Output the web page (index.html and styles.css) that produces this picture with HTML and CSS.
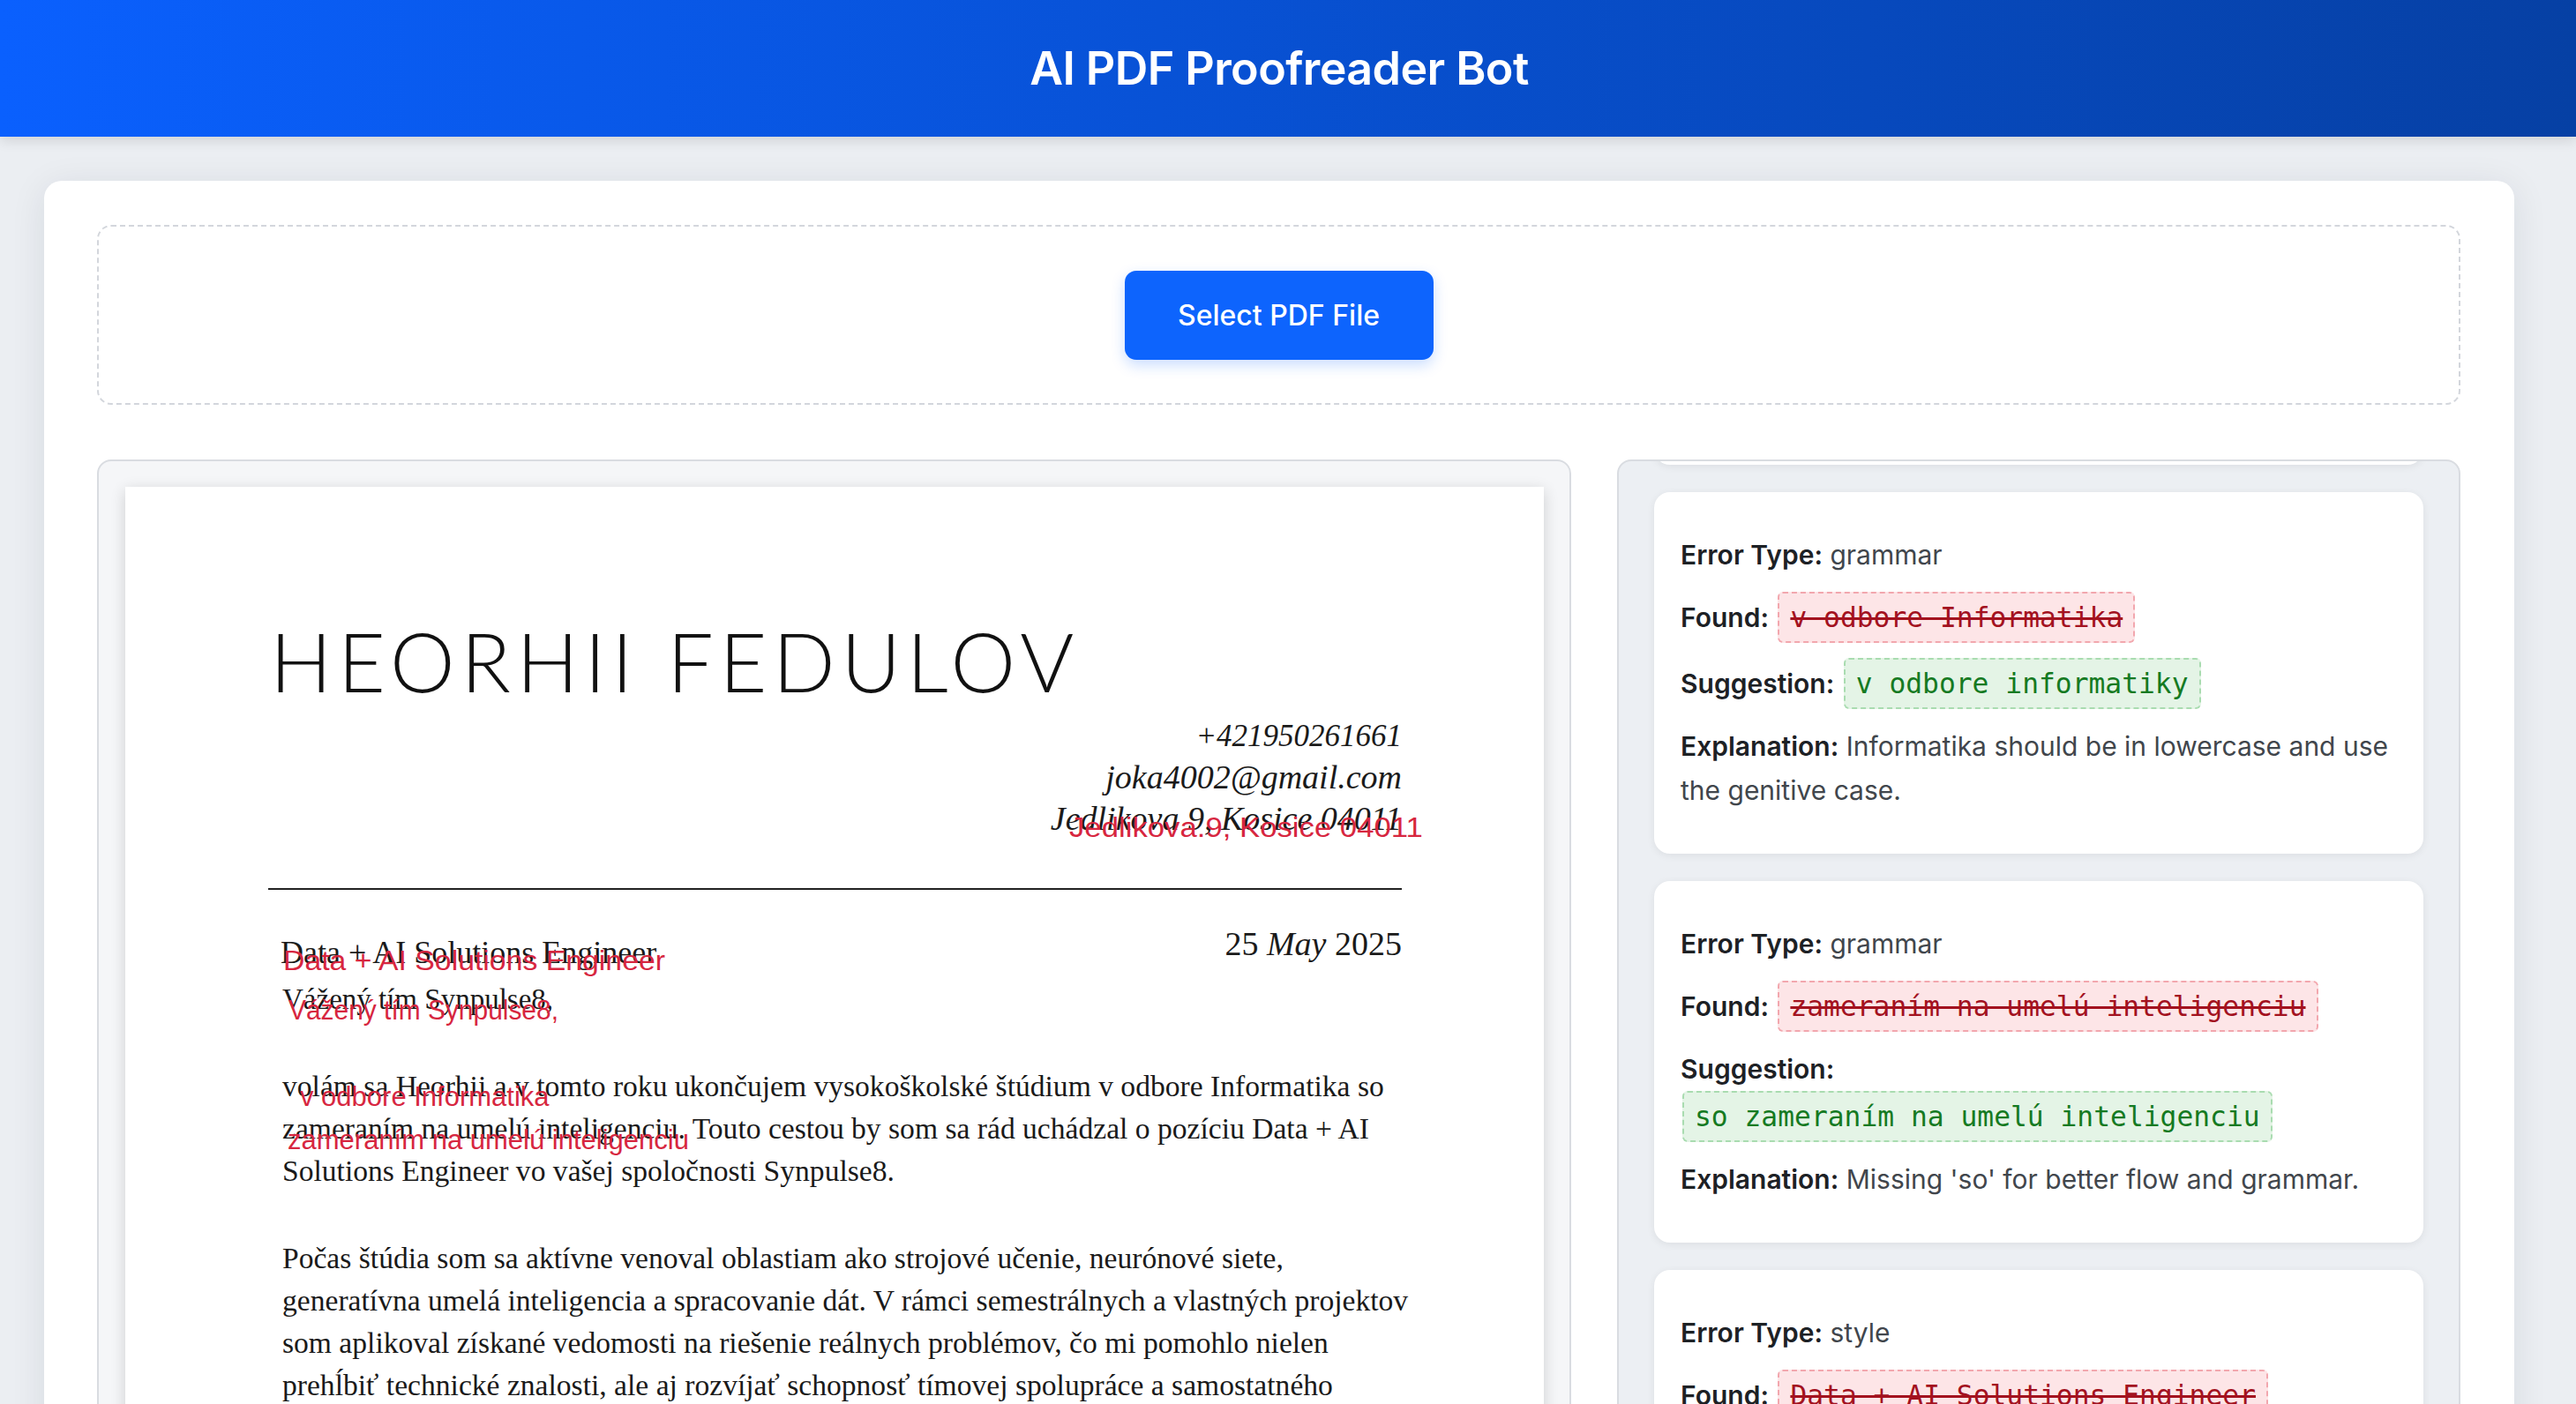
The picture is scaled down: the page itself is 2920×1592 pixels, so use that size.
FILE: index.html
```html
<!DOCTYPE html>
<html lang="en">
<head>
<meta charset="utf-8">
<title>AI PDF Proofreader Bot</title>
<link rel="stylesheet" href="styles.css">
</head>
<body>
<header class="topbar">
  <h1 class="topbar-title">AI PDF Proofreader Bot</h1>
</header>
<main class="shell">
  <section class="upload">
    <button class="upload-btn" type="button">Select PDF File</button>
  </section>
  <section class="workspace">
    <div class="viewer">
      <div class="page">
        <div class="pdf-name">HEORHII FEDULOV</div>
        <div class="pdf-contacts">
          <div class="pdf-phone">+421950261661</div>
          <div>joka4002@gmail.com</div>
          <div>Jedlikova 9, Kosice 04011</div>
        </div>
        <div class="pdf-rule"></div>
        <div class="pdf-row">
          <div class="pdf-role">Data + AI Solutions Engineer</div>
          <div class="pdf-date">25 <i>May</i> 2025</div>
        </div>
        <div class="pdf-greet">Vážený tím Synpulse8,</div>
        <div class="pdf-par">
          <div>volám sa Heorhii a v tomto roku ukončujem vysokoškolské štúdium v odbore Informatika so</div>
          <div>zameraním na umelú inteligenciu. Touto cestou by som sa rád uchádzal o pozíciu Data + AI</div>
          <div>Solutions Engineer vo vašej spoločnosti Synpulse8.</div>
        </div>
        <div class="pdf-par pdf-par-2">
          <div>Počas štúdia som sa aktívne venoval oblastiam ako strojové učenie, neurónové siete,</div>
          <div>generatívna umelá inteligencia a spracovanie dát. V rámci semestrálnych a vlastných projektov</div>
          <div>som aplikoval získané vedomosti na riešenie reálnych problémov, čo mi pomohlo nielen</div>
          <div>prehĺbiť technické znalosti, ale aj rozvíjať schopnosť tímovej spolupráce a samostatného</div>
          <div>riešenia úloh.</div>
        </div>
        <span class="mark mark-address">Jedlikova.9, Kosice 04011</span>
        <span class="mark mark-role">Data + AI Solutions Engineer</span>
        <span class="mark mark-greet">Vážený tím Synpulse8,</span>
        <span class="mark mark-field">v odbore Informatika</span>
        <span class="mark mark-focus">zameraním na umelú inteligenciu</span>
      </div>
    </div>
    <div class="results">
      <div class="results-list">
        <article class="issue">
          <p><b>Error Type:</b> spelling</p>
          <p><b>Found:</b> <span class="found">Kosice</span></p>
          <p><b>Suggestion:</b> <span class="fix">Košice</span></p>
          <p><b>Explanation:</b> Missing diacritics in the city name.</p>
        </article>
        <article class="issue">
          <p><b>Error Type:</b> grammar</p>
          <p><b>Found:</b> <span class="found">v odbore Informatika</span></p>
          <p><b>Suggestion:</b> <span class="fix">v odbore informatiky</span></p>
          <p><b>Explanation:</b> Informatika should be in lowercase and use the genitive case.</p>
        </article>
        <article class="issue">
          <p><b>Error Type:</b> grammar</p>
          <p><b>Found:</b> <span class="found">zameraním na umelú inteligenciu</span></p>
          <p><b>Suggestion:</b> <span class="fix">so zameraním na umelú inteligenciu</span></p>
          <p><b>Explanation:</b> Missing 'so' for better flow and grammar.</p>
        </article>
        <article class="issue">
          <p><b>Error Type:</b> style</p>
          <p><b>Found:</b> <span class="found">Data + AI Solutions Engineer</span></p>
          <p><b>Suggestion:</b> <span class="fix">Data &amp; AI Solutions Engineer</span></p>
          <p><b>Explanation:</b> Use a consistent job title format.</p>
        </article>
      </div>
    </div>
  </section>
</main>
</body>
</html>
```

FILE: styles.css
```css
* { box-sizing: border-box; }

html, body {
  margin: 0;
  padding: 0;
}

body {
  background: #ebeef2;
  font-family: Inter, "Noto Sans", "Liberation Sans", sans-serif;
  color: #1d2125;
}

.topbar {
  height: 155px;
  padding-right: 20px;
  background: linear-gradient(90deg, #0a60fe 0%, #0852d6 45%, #0640a4 100%);
  box-shadow: 0 4px 14px rgba(0, 0, 0, 0.12);
  display: flex;
  align-items: center;
  justify-content: center;
}

.topbar-title {
  margin: 0;
  color: #ffffff;
  font-size: 52px;
  font-weight: 600;
  letter-spacing: -0.6px;
  line-height: 1;
}

.shell {
  margin: 50px 70px 0 50px;
  background: #ffffff;
  border-radius: 20px;
  box-shadow: 0 6px 40px rgba(20, 30, 50, 0.09);
  padding: 50px 61px 60px 60px;
}

.upload {
  border: 2px dashed #d3d6dc;
  border-radius: 16px;
  padding: 50px 0 49px;
  display: flex;
  justify-content: center;
}

.upload-btn {
  background: #0d64fd;
  color: #ffffff;
  border: none;
  border-radius: 13px;
  height: 101px;
  width: 350px;
  font-family: Inter, "Noto Sans", sans-serif;
  font-size: 32px;
  font-weight: 500;
  box-shadow: 0 6px 16px rgba(13, 100, 253, 0.22);
}

.workspace {
  margin-top: 62px;
  display: grid;
  grid-template-columns: 1671fr 956fr;
  gap: 52px;
}

.viewer {
  background: #f5f6f8;
  border: 2px solid #d9dce1;
  border-radius: 16px;
  padding: 29px 29px 0 30px;
  height: 1200px;
  overflow: hidden;
}

.page {
  position: relative;
  background: #ffffff;
  box-shadow: 0 4px 16px rgba(0, 0, 0, 0.16);
  padding: 147px 161px 200px 162px;
  font-family: "Liberation Serif", "DejaVu Serif", serif;
  color: #1a1a1a;
}

.pdf-name {
  font-family: Lato, "DejaVu Sans", sans-serif;
  font-weight: 300;
  font-size: 93px;
  line-height: 100px;
  letter-spacing: 6.7px;
  padding-left: 2px;
  color: #111111;
}

.pdf-contacts {
  margin-top: 12px;
  text-align: right;
  font-style: italic;
  font-size: 38px;
  line-height: 47px;
}

.pdf-phone {
  font-size: 35px;
}

.pdf-rule {
  margin-top: 55px;
  height: 2px;
  background: #222222;
}

.pdf-row {
  margin-top: 37px;
  display: flex;
  justify-content: space-between;
  align-items: flex-start;
}

.pdf-role {
  margin-top: 10px;
  padding-left: 14px;
  font-size: 36px;
  line-height: 48px;
}

.pdf-date {
  font-size: 38px;
  line-height: 48px;
}

.pdf-greet {
  margin-top: 5px;
  padding-left: 16px;
  font-size: 33px;
  line-height: 48px;
}

.pdf-par {
  margin-top: 51px;
  padding-left: 16px;
  font-size: 33.6px;
  line-height: 48px;
  white-space: nowrap;
}

.pdf-par-2 {
  margin-top: 51px;
}

.mark {
  position: absolute;
  font-family: "Liberation Sans", Arial, sans-serif;
  font-size: 31px;
  line-height: 34px;
  color: #d7263f;
  white-space: nowrap;
  transform-origin: left top;
}

.mark-address { left: 1070px; top: 370px; transform: scaleX(1.12); }
.mark-role { left: 179px; top: 521px; transform: scaleX(1.09); }
.mark-greet { left: 185px; top: 577px; transform: scaleX(0.965); }
.mark-field { left: 198px; top: 675px; }
.mark-focus { left: 184px; top: 724px; }

.results {
  background: #eceff3;
  border: 2px solid #d9dce1;
  border-radius: 16px;
  padding: 0 40px;
  height: 1200px;
  overflow: hidden;
}

.results-list {
  margin-top: -356px;
  display: flex;
  flex-direction: column;
  gap: 31px;
}

.issue {
  background: #ffffff;
  border-radius: 18px;
  box-shadow: 0 2px 10px rgba(0, 0, 0, 0.07);
  padding: 29px 30px 30px;
  font-size: 30px;
  line-height: 50px;
  color: #41464c;
}

.issue p {
  margin: 17px 0;
}

.issue b {
  color: #1d2125;
  font-weight: 600;
}

.found,
.fix {
  display: inline-block;
  font-family: "DejaVu Sans Mono", "Liberation Mono", monospace;
  font-size: 31.3px;
  line-height: 50px;
  padding: 2px 12px;
  border-radius: 6px;
  margin-left: 2px;
}

.found {
  background: #fde5e7;
  border: 2px dashed #f2a7ae;
  color: #a3121f;
  text-decoration: line-through;
  text-decoration-thickness: 3px;
}

.fix {
  background: #e4f4e6;
  border: 2px dashed #a9dcb0;
  color: #157a22;
}
```
